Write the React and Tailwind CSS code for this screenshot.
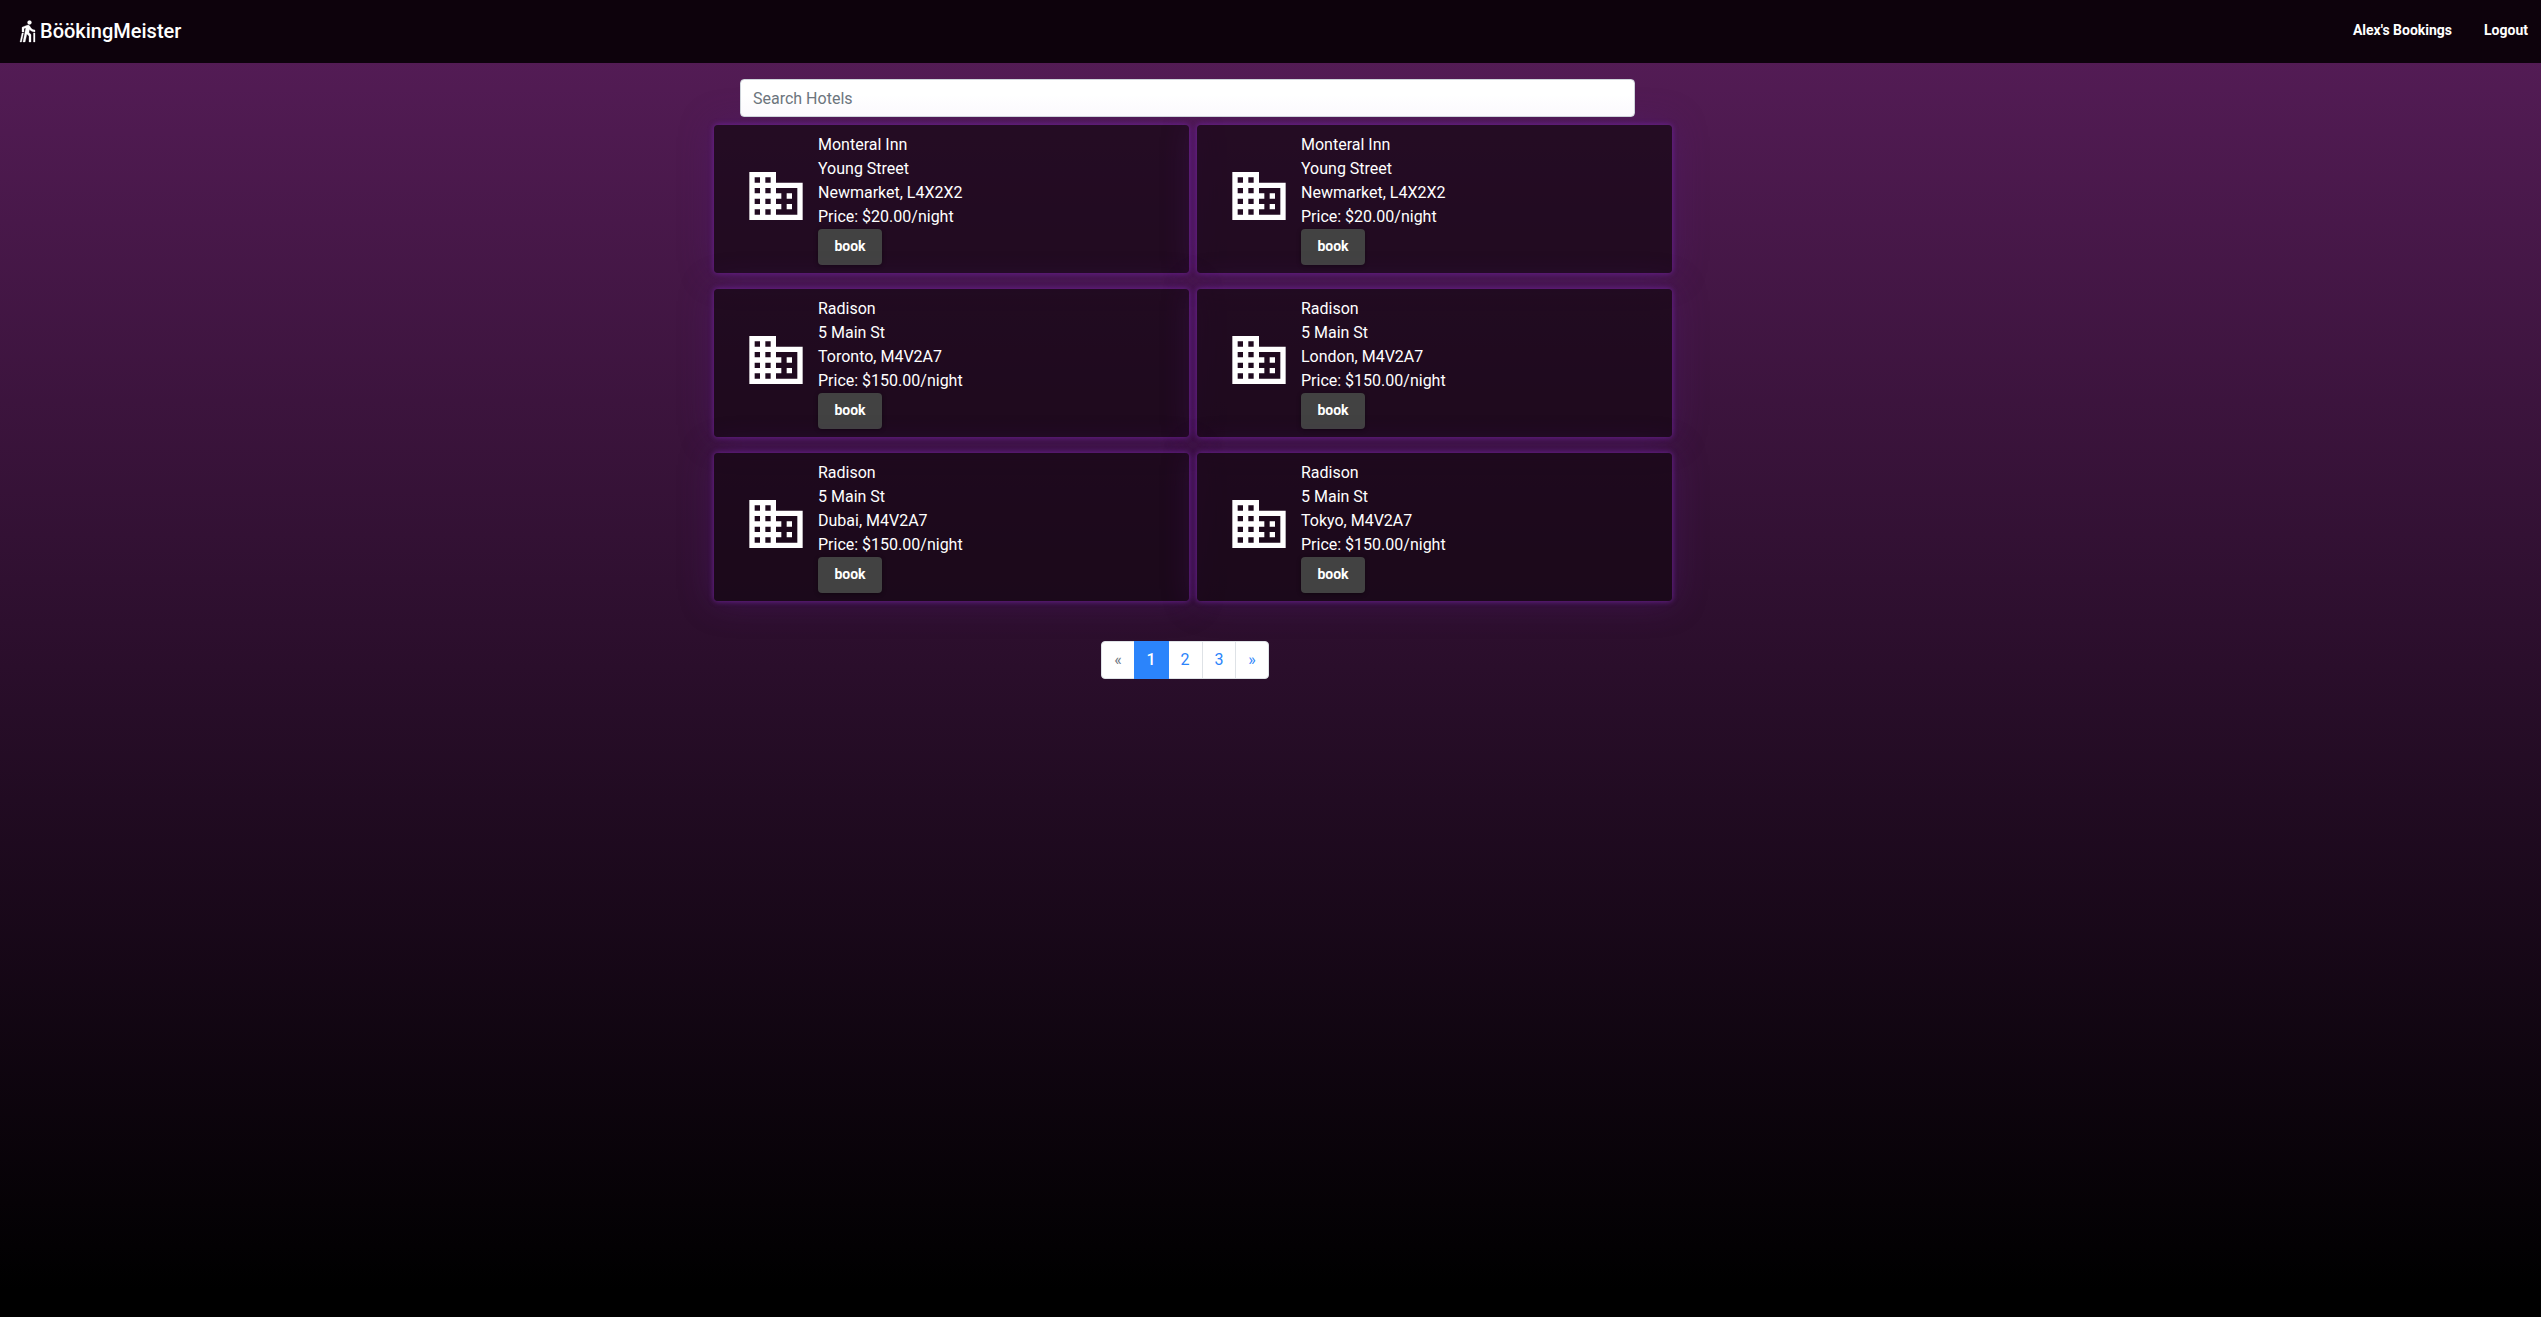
import { MdBusiness, MdNordicWalking } from "react-icons/md";

const hotels = [
  ["Monteral Inn", "Young Street", "Newmarket, L4X2X2", "20.00"],
  ["Monteral Inn", "Young Street", "Newmarket, L4X2X2", "20.00"],
  ["Radison", "5 Main St", "Toronto, M4V2A7", "150.00"],
  ["Radison", "5 Main St", "London, M4V2A7", "150.00"],
  ["Radison", "5 Main St", "Dubai, M4V2A7", "150.00"],
  ["Radison", "5 Main St", "Tokyo, M4V2A7", "150.00"],
];

function HotelCard({ hotel }) {
  const [name, street, city, price] = hotel;
  return (
    <article className="flex h-[148px] rounded bg-[rgba(20,7,19,0.73)] pl-[30px] pt-2 shadow-[0_0_5px_1px_rgba(106,34,148,0.8),0_0_34px_rgba(88,25,125,0.4)]">
      <MdBusiness className="mt-[31px] size-16 shrink-0 text-white" />
      <div className="ml-[10px] text-base leading-6 text-white">
        <p>{name}</p>
        <p>{street}</p>
        <p>{city}</p>
        <p>Price: ${price}/night</p>
        <button className="block h-9 w-16 rounded bg-[#424242] pb-0.5 text-sm font-bold shadow-[0_1px_4px_rgba(0,0,0,0.4)]">book</button>
      </div>
    </article>
  );
}

export default function App() {
  return (
    <div className="h-[1317px] overflow-hidden bg-[linear-gradient(#571d59,#000_98%)] font-[Roboto,sans-serif]">
      <header className="flex h-[63px] items-center justify-between bg-[#0d020c] pl-4 pr-[13px] text-white">
        <div className="flex items-center pb-px text-xl font-medium">
          <MdNordicWalking className="size-6 [&>path[fill=none]]:stroke-none" stroke="currentColor" strokeWidth="0.3" />
          <span className="-mt-px">BöökingMeister</span>
        </div>
        <nav className="flex gap-8 pb-[3px] text-sm font-bold">
          <a>Alex's Bookings</a>
          <a>Logout</a>
        </nav>
      </header>
      <main className="ml-[714px] w-[958px] pt-4">
        <input
          className="relative z-10 ml-[26px] block h-[38px] w-[895px] rounded border border-[#ced4da] bg-[linear-gradient(#fff_40%,#fbf9fd)] px-3 text-base placeholder:text-[#6c757d]"
          placeholder="Search Hotels"
        />
        <section className="mt-2 grid grid-cols-2 gap-x-2 gap-y-4">
          {hotels.map((hotel, i) => (
            <HotelCard key={i} hotel={hotel} />
          ))}
        </section>
        <nav className="ml-[387px] mt-10 flex h-[38px] w-[168px] rounded border border-[#dee2e6] bg-white text-base leading-9 text-[#2b84fb]">
          <span className="w-8 text-center text-[#6c757d]">«</span>
          <span className="-my-px w-[35px] bg-[#2b84fb] pr-px text-center font-medium leading-[38px] text-white">1</span>
          <span className="w-[33px] pr-px text-center">2</span>
          <span className="w-[33px] border-l border-[#dee2e6] text-center">3</span>
          <span className="w-[33px] border-l border-[#dee2e6] text-center">»</span>
        </nav>
      </main>
    </div>
  );
}
